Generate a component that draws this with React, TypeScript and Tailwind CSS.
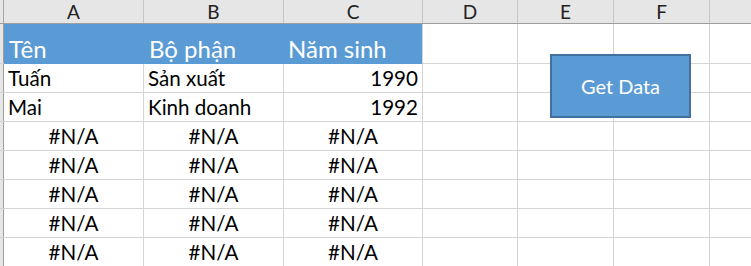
import React from "react";

const cols = [
  { key: "A", w: "w-[140px]" },
  { key: "B", w: "w-[140px]" },
  { key: "C", w: "w-[139px]" },
  { key: "D", w: "w-[95px]" },
  { key: "E", w: "w-[96px]" },
  { key: "F", w: "w-[96px]" },
];

type Cell = { t: string; align?: "l" | "r" | "c" };

const rows: Cell[][] = [
  [{ t: "Tuấn" }, { t: "Sản xuất" }, { t: "1990", align: "r" }],
  [{ t: "Mai" }, { t: "Kinh doanh" }, { t: "1992", align: "r" }],
  [{ t: "#N/A", align: "c" }, { t: "#N/A", align: "c" }, { t: "#N/A", align: "c" }],
  [{ t: "#N/A", align: "c" }, { t: "#N/A", align: "c" }, { t: "#N/A", align: "c" }],
  [{ t: "#N/A", align: "c" }, { t: "#N/A", align: "c" }, { t: "#N/A", align: "c" }],
  [{ t: "#N/A", align: "c" }, { t: "#N/A", align: "c" }, { t: "#N/A", align: "c" }],
  [{ t: "#N/A", align: "c" }, { t: "#N/A", align: "c" }, { t: "#N/A", align: "c" }],
];

const alignCls = (a?: string) =>
  a === "r" ? "justify-end pr-[4px]" : a === "c" ? "justify-center" : "justify-start pl-[4px]";

export default function App() {
  return (
    <div
      className="relative w-[751px] h-[266px] overflow-hidden bg-white text-black"
      style={{ fontFamily: "Lato, 'Open Sans', sans-serif" }}
    >
      {/* column header */}
      <div className="flex h-[24px] bg-[#e6e6e6] border-b border-[#9e9e9e]">
        <div className="w-[4px] shrink-0 border-r border-[#a6a6a6]" />
        {cols.map((c) => (
          <div
            key={c.key}
            className={`${c.w} shrink-0 border-r border-[#c6c6c6] flex items-center justify-center text-[19px] leading-none text-[#222]`}
          >
            {c.key}
          </div>
        ))}
        <div className="flex-1" />
      </div>

      {/* row 1 */}
      <div className="flex h-[40px] border-b border-[#d4d4d4]">
        <div className="w-[4px] shrink-0 bg-[#e6e6e6] border-r border-[#9e9e9e]" />
        <div className="w-[418px] shrink-0 bg-[#5b9bd5] flex text-white text-[24px] leading-[31px] -mb-px">
          <div className="w-[140px] shrink-0 pl-[5px] flex items-end">Tên</div>
          <div className="w-[140px] shrink-0 pl-[5px] flex items-end">Bộ phận</div>
          <div className="w-[138px] shrink-0 pl-[4px] flex items-end">Năm sinh</div>
        </div>
        <div className="w-px shrink-0 bg-[#d4d4d4]" />
        {cols.slice(3).map((c) => (
          <div key={c.key} className={`${c.w} shrink-0 border-r border-[#d4d4d4]`} />
        ))}
        <div className="flex-1" />
      </div>

      {rows.map((r, i) => (
        <div key={i} className="flex h-[29px] border-b border-[#d4d4d4]">
          <div className="w-[4px] shrink-0 bg-[#e6e6e6] border-r border-[#9e9e9e]" />
          {cols.map((c, j) => {
            const cell = r[j];
            return (
              <div
                key={c.key}
                className={`${c.w} shrink-0 border-r border-[#d4d4d4] flex items-end text-[20.6px] leading-[27px] ${alignCls(cell?.align)}`}
              >
                {cell?.t ?? ""}
              </div>
            );
          })}
          <div className="flex-1" />
        </div>
      ))}

      {/* shape button */}
      <div className="absolute left-[550px] top-[54px] w-[141px] h-[64px] bg-[#5b9bd5] border-2 border-[#41719c] flex items-center justify-center text-white text-[20px]">
        Get Data
      </div>
    </div>
  );
}
